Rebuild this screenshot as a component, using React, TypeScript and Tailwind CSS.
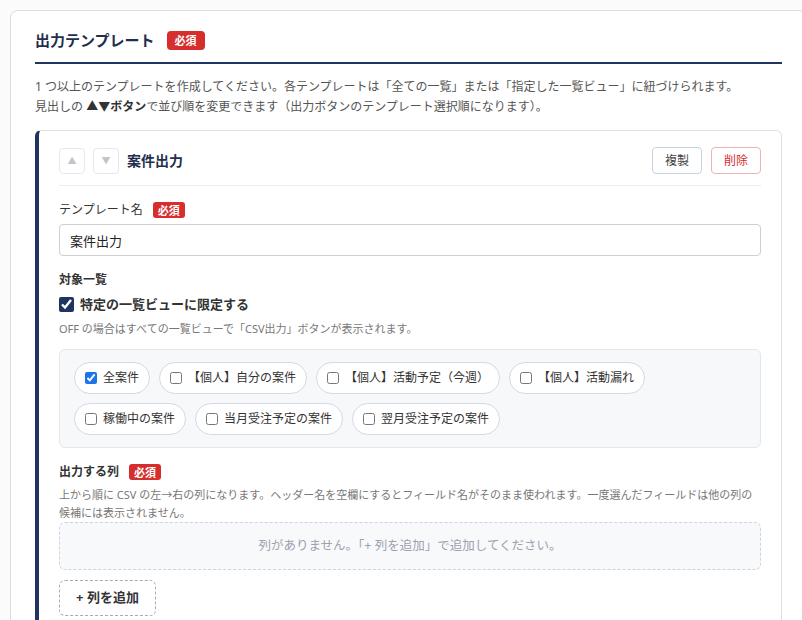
const viewOptions = [
  { label: '全案件', checked: true },
  { label: '【個人】自分の案件', checked: false },
  { label: '【個人】活動予定（今週）', checked: false },
  { label: '【個人】活動漏れ', checked: false },
  { label: '稼働中の案件', checked: false },
  { label: '当月受注予定の案件', checked: false },
  { label: '翌月受注予定の案件', checked: false },
]

function RequiredBadge({ large }: { large?: boolean }) {
  return (
    <span
      className={
        large
          ? 'inline-flex items-center h-[19px] px-[8px] rounded-[4px] bg-[#d62d2d] text-white text-[11px] font-bold leading-none'
          : 'inline-flex items-center h-[16px] px-[5px] rounded-[3px] bg-[#d62d2d] text-white text-[11px] font-bold leading-none'
      }
    >
      必須
    </span>
  )
}

function ViewChip({ label, checked }: { label: string; checked: boolean }) {
  return (
    <label className="flex items-center gap-[6px] h-[32px] pl-[10px] pr-[10px] rounded-full border border-[#d3dae6] bg-white text-[12px] text-[#333]">
      <input type="checkbox" defaultChecked={checked} className="w-[12px] h-[12px] m-0 accent-[#1a73e8]" />
      <span>{label}</span>
    </label>
  )
}

export default function App() {
  return (
    <div
      className="w-[802px] h-[620px] overflow-hidden bg-[#fbfbfb] pt-[10px] pl-[10px]"
      style={{ fontFamily: '"Noto Sans", "Noto Sans CJK JP", sans-serif' }}
    >
      <section className="w-[797px] min-h-[700px] bg-white border border-[#dcdcdc] rounded-[8px] pt-[16px] px-[24px]">
        <header className="flex items-center gap-[12px] pb-[9px] border-b-2 border-[#1f3461]">
          <h2 className="text-[15px] leading-[26px] font-bold text-[#1f2f4d]">出力テンプレート</h2>
          <RequiredBadge large />
        </header>

        <p className="mt-[13px] text-[12px] leading-[20px] text-[#555]">
          1 つ以上のテンプレートを作成してください。各テンプレートは「全ての一覧」または「指定した一覧ビュー」に紐づけられます。
          <br />
          見出しの <b className="text-[#333]">▲▼ボタン</b>で並び順を変更できます（出力ボタンのテンプレート選択順になります）。
        </p>

        <div className="mt-[13px] border border-[#e0e0e0] border-l-4 border-l-[#1f3461] rounded-[6px] pt-[16px] px-[20px] pb-[20px]">
          <div className="flex items-center pb-[11px] border-b border-[#ececec]">
            <button className="w-[26px] h-[26px] flex items-center justify-center border border-[#e6e8ec] rounded-[4px] text-[9px] text-[#c0c4cc]">▲</button>
            <button className="ml-[8px] w-[26px] h-[26px] flex items-center justify-center border border-[#e6e8ec] rounded-[4px] text-[9px] text-[#c0c4cc]">▼</button>
            <span className="ml-[8px] text-[14px] font-bold text-[#1f2f4d]">案件出力</span>
            <div className="ml-auto flex items-center gap-[9px]">
              <button className="h-[27px] px-[12px] border border-[#c7d2e0] rounded-[4px] text-[12px] text-[#444] bg-white">複製</button>
              <button className="h-[27px] px-[12px] border border-[#efb3b3] rounded-[4px] text-[12px] text-[#d3302c] bg-white">削除</button>
            </div>
          </div>

          <div className="mt-[14px] flex items-center gap-[10px]">
            <span className="text-[12px] leading-[20px] text-[#333]">テンプレート名</span>
            <RequiredBadge />
          </div>
          <input
            defaultValue="案件出力"
            className="mt-[4px] w-full h-[32px] px-[10px] border border-[#cfcfcf] rounded-[4px] text-[13px] text-[#222] outline-none"
          />

          <div className="mt-[14px] text-[12px] leading-[20px] font-bold text-[#333]">対象一覧</div>
          <label className="mt-[4px] flex items-center gap-[6px] text-[13px] leading-[20px] font-bold text-[#333]">
            <input type="checkbox" defaultChecked className="w-[15px] h-[15px] m-0 accent-[#1f3461]" />
            特定の一覧ビューに限定する
          </label>
          <p className="mt-[6px] text-[11px] leading-[18px] text-[#777]">
            OFF の場合はすべての一覧ビューで「CSV出力」ボタンが表示されます。
          </p>

          <div className="mt-[11px] flex flex-wrap gap-x-[9px] gap-y-[9px] px-[14px] py-[12px] bg-[#f7f8fa] border border-[#e3e7ee] rounded-[6px]">
            {viewOptions.map((v) => (
              <ViewChip key={v.label} label={v.label} checked={v.checked} />
            ))}
          </div>

          <div className="mt-[14px] flex items-center gap-[10px]">
            <span className="text-[12px] leading-[20px] font-bold text-[#333]">出力する列</span>
            <RequiredBadge />
          </div>
          <p className="mt-[4px] text-[11px] leading-[18px] text-[#777]">
            上から順に CSV の左→右の列になります。ヘッダー名を空欄にするとフィールド名がそのまま使われます。一度選んだフィールドは他の列の候補には表示されません。
          </p>
          <div className="h-[48px] flex items-center justify-center border border-dashed border-[#ccd4e0] bg-[#f8f9fb] rounded-[6px] text-[12.5px] text-[#9aa2ae]">
            列がありません。「+ 列を追加」で追加してください。
          </div>
          <button className="mt-[10px] h-[36px] w-[97px] border border-dashed border-[#a3abba] rounded-[6px] text-[13px] font-bold text-[#333] bg-white">
            + 列を追加
          </button>
        </div>
      </section>
    </div>
  )
}
